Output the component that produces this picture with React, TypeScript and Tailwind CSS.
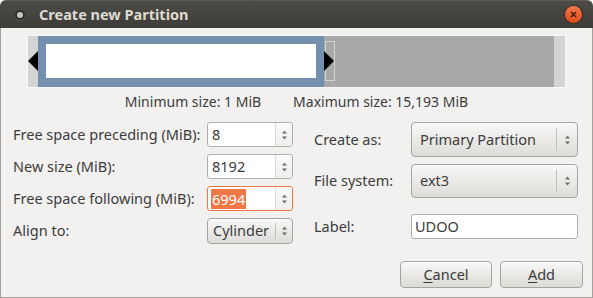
import React from "react"

const font = { fontFamily: '"Noto Sans", "Open Sans", sans-serif' }

function Arrows() {
    return (
        <svg width="7" height="14" viewBox="0 0 7 14" className="shrink-0">
            <path d="M3.5 2.5 L6 5.5 L1 5.5 Z" fill="#6e6d69" />
            <path d="M3.5 11.5 L6 8.5 L1 8.5 Z" fill="#6e6d69" />
        </svg>
    )
}

function SpinBox({ value, focused }: { value: string; focused?: boolean }) {
    return (
        <div
            className={
                "flex h-[25px] w-[86px] rounded-[3px] border bg-white " +
                (focused ? "border-[#e9773f]" : "border-[#b3afa8]")
            }
        >
            <div className="flex flex-1 items-center pl-[3px] text-[14.5px] text-[#3c3c3c]">
                {focused ? (
                    <span className="bg-[#f07746] px-[1px] leading-[20px] text-white">{value}</span>
                ) : (
                    <span className="px-[1px]">{value}</span>
                )}
            </div>
            <div className="flex w-[17px] items-center justify-center rounded-r-[3px] border-l border-[#dcdad6] bg-gradient-to-b from-[#fbfbfa] to-[#efeeec]">
                <Arrows />
            </div>
        </div>
    )
}

function Combo({ value, className }: { value: string; className: string }) {
    return (
        <div
            className={
                "flex items-center rounded-[4px] border border-[#a8a49d] bg-gradient-to-b from-[#f8f8f7] to-[#dedcd8] text-[14.5px] text-[#3c3c3c] shadow-[inset_0_1px_0_#ffffff] " +
                className
            }
        >
            <span className="flex-1 pl-[8px]">{value}</span>
            <div className="h-[70%] border-l border-[#c4c1bb]" />
            <div className="flex w-[20px] justify-center">
                <Arrows />
            </div>
        </div>
    )
}

function Button({ mnemonic, rest, width }: { mnemonic: string; rest: string; width: string }) {
    return (
        <div
            className={
                "flex h-[27px] items-center justify-center rounded-[4px] border border-[#a8a49d] bg-gradient-to-b from-[#f8f8f7] to-[#dcdad5] text-[14.5px] text-[#3c3c3c] shadow-[inset_0_1px_0_#ffffff] " +
                width
            }
        >
            <span>
                <span className="underline underline-offset-2">{mnemonic}</span>
                {rest}
            </span>
        </div>
    )
}

function PartitionBar() {
    return (
        <svg width="539" height="53" viewBox="0 0 539 53">
            <rect x="0.5" y="0.5" width="538" height="52" fill="#d4d4d4" stroke="#f8f8f8" />
            <rect x="11" y="1" width="286" height="51" fill="#7590ae" />
            <rect x="19" y="9" width="270" height="34" fill="#ffffff" />
            <rect x="297" y="1" width="230" height="51" fill="#a8a8a8" />
            <rect x="298.5" y="6.5" width="9" height="39" fill="none" stroke="#d2d2d2" />
            <path d="M1 26 L11 16 L11 36 Z" fill="#000" />
            <path d="M307 26 L297 16 L297 36 Z" fill="#000" />
        </svg>
    )
}

export default function App() {
    return (
        <div
            className="flex h-[298px] w-[593px] flex-col overflow-hidden rounded-t-[6px] bg-[#f2f1f0]"
            style={font}
        >
            <div className="flex h-[28px] shrink-0 items-center border-t border-[#5c5b56] bg-gradient-to-b from-[#4c4b46] to-[#3d3c38]">
                <div className="ml-[15px] flex h-[10px] w-[10px] items-center justify-center rounded-full bg-[#2e2d2a] shadow-[0_1px_0_#5a5954]">
                    <div className="h-[6px] w-[6px] rounded-full bg-[#c8c6c0]" />
                </div>
                <span className="ml-[14px] text-[14.5px] font-bold text-[#dfdbd2]">Create new Partition</span>
                <div className="ml-auto mr-[11px] flex h-[17px] w-[17px] items-center justify-center rounded-full bg-gradient-to-b from-[#f4784a] to-[#dd4814] shadow-[0_0_0_1px_#3a2a22]">
                    <svg width="7" height="7" viewBox="0 0 7 7">
                        <path d="M1 1 L6 6 M6 1 L1 6" stroke="#3a1c10" strokeWidth="1.4" />
                    </svg>
                </div>
            </div>

            <div className="flex flex-1 flex-col border-x border-b border-[#a5a29c]">
                <div className="ml-[26px] mt-[7px]">
                    <PartitionBar />
                </div>

                <div className="mt-[3px] flex justify-center gap-[32px] text-[14px] text-[#3c3c3c]">
                    <span>Minimum size: 1 MiB</span>
                    <span>Maximum size: 15,193 MiB</span>
                </div>

                <div className="mt-[10px] flex">
                    <div className="grid w-[292px] grid-cols-[194px_86px] gap-y-[7px] pl-[12px] text-[14.5px] text-[#3c3c3c]">
                        <span className="flex items-center">Free space preceding (MiB):</span>
                        <SpinBox value="8" />
                        <span className="flex items-center">New size (MiB):</span>
                        <SpinBox value="8192" />
                        <span className="flex items-center">Free space following (MiB):</span>
                        <SpinBox value="6994" focused />
                        <span className="flex items-center">Align to:</span>
                        <Combo value="Cylinder" className="h-[26px] w-[86px] [&>span]:pl-[5px] [&>div:last-child]:w-[16px]" />
                    </div>

                    <div className="ml-[21px] flex flex-1 flex-col pr-[14px] text-[14.5px] text-[#3c3c3c]">
                        <div className="flex items-center">
                            <span className="w-[97px]">Create as:</span>
                            <Combo value="Primary Partition" className="h-[35px] flex-1" />
                        </div>
                        <div className="mt-[7px] flex items-center">
                            <span className="w-[97px]">File system:</span>
                            <Combo value="ext3" className="h-[34px] flex-1" />
                        </div>
                        <div className="mt-[16px] flex items-center">
                            <span className="w-[97px]">Label:</span>
                            <div className="flex h-[25px] flex-1 items-center rounded-[3px] border border-[#b3afa8] bg-white pl-[3px]">
                                UDOO
                            </div>
                        </div>
                    </div>
                </div>

                <div className="mt-auto mb-[9px] ml-auto mr-[9px] flex gap-[8px]">
                    <Button mnemonic="C" rest="ancel" width="w-[92px]" />
                    <Button mnemonic="A" rest="dd" width="w-[83px]" />
                </div>
            </div>
        </div>
    )
}
